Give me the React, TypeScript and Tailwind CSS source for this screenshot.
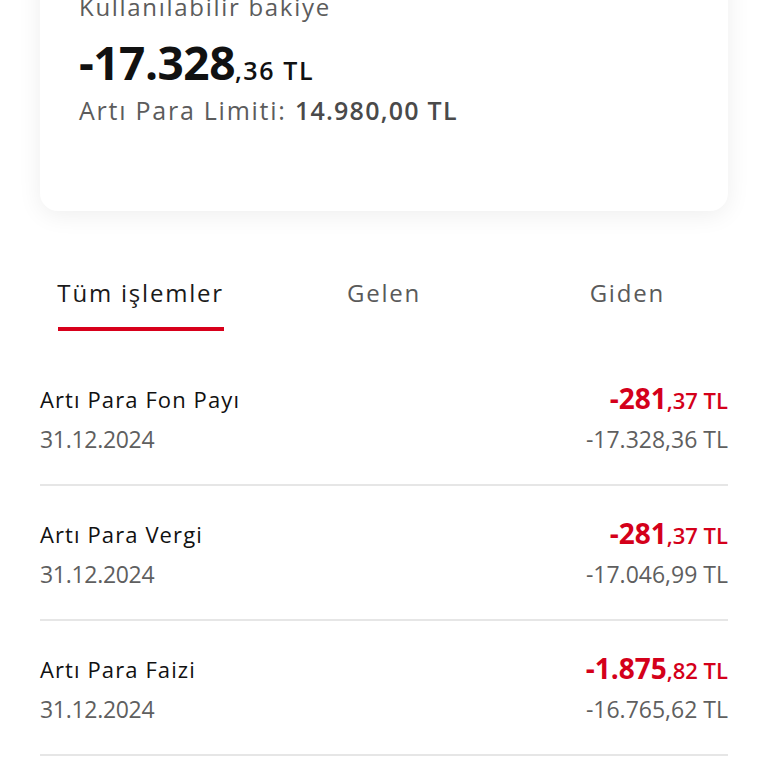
const FONT = "font-['Open_Sans','Noto_Sans',sans-serif]";

const ROWS = [
  { title: "Artı Para Fon Payı", date: "31.12.2024", main: "-281", cents: ",37", balance: "-17.328,36 TL" },
  { title: "Artı Para Vergi", date: "31.12.2024", main: "-281", cents: ",37", balance: "-17.046,99 TL" },
  { title: "Artı Para Faizi", date: "31.12.2024", main: "-1.875", cents: ",82", balance: "-16.765,62 TL" },
];

const TABS = ["Tüm işlemler", "Gelen", "Giden"];

export default function App() {
  return (
    <div className={`w-[768px] h-[768px] overflow-hidden bg-white ${FONT}`}>
      <div className="px-10">
        <div className="-mt-[40px] h-[251px] rounded-[18px] bg-white px-[39px] pt-[33px] shadow-[0_4px_24px_rgba(0,0,0,0.07)]">
          <p className="h-[28px] text-[24px] leading-[28px] tracking-[1.7px] text-[#5c5c5c]">Kullanılabilir bakiye</p>
          <div className="mt-[15px] flex h-[52px] items-baseline text-[#111]">
            <span className="text-[46px] leading-[52px] font-bold tracking-[-0.5px]">-17.328</span>
            <span className="text-[25px] leading-[52px] font-semibold tracking-[1.6px]">,36 TL</span>
          </div>
          <p className="mt-[7px] h-[30px] text-[25px] leading-[30px] tracking-[1.75px] text-[#5c5c5c]">
            Artı Para Limiti: <span className="font-semibold tracking-[1.25px] text-[#4a4a4a]">14.980,00 TL</span>
          </p>
        </div>
      </div>

      <div className="mt-[67px] grid grid-cols-3 px-[19px]">
        {TABS.map((tab, i) => (
          <div key={tab} className="flex flex-col items-center">
            <span
              className={`h-[30px] text-[24px] leading-[30px] font-medium tracking-[1.8px] ${
                i === 0 ? "text-[#1a1a1a]" : "text-[#5a5a5a]"
              }`}
            >
              {tab}
            </span>
            <div className={`mt-[19px] h-[4px] w-[166px] ${i === 0 ? "bg-[#d8001b]" : "bg-transparent"}`} />
          </div>
        ))}
      </div>

      <div className="mt-[20px] px-10">
        {ROWS.map((row) => (
          <div key={row.balance} className="border-b-2 border-[#e6e6e6] pt-[33px] pb-[30px]">
            <div className="flex h-[30px] items-center justify-between">
              <span className="text-[22px] leading-[30px] font-medium tracking-[1.1px] text-[#111]">{row.title}</span>
              <span className="flex items-baseline font-bold text-[#d4001a]">
                <span className="text-[28px] leading-[30px]">{row.main}</span>
                <span className="text-[22px] leading-[30px] font-semibold">{row.cents} TL</span>
              </span>
            </div>
            <div className="mt-[10px] flex h-[30px] items-center justify-between text-[23px] leading-[30px] text-[#5f5f5f]">
              <span className="tracking-[-0.3px]">{row.date}</span>
              <span>{row.balance}</span>
            </div>
          </div>
        ))}
      </div>
    </div>
  );
}
